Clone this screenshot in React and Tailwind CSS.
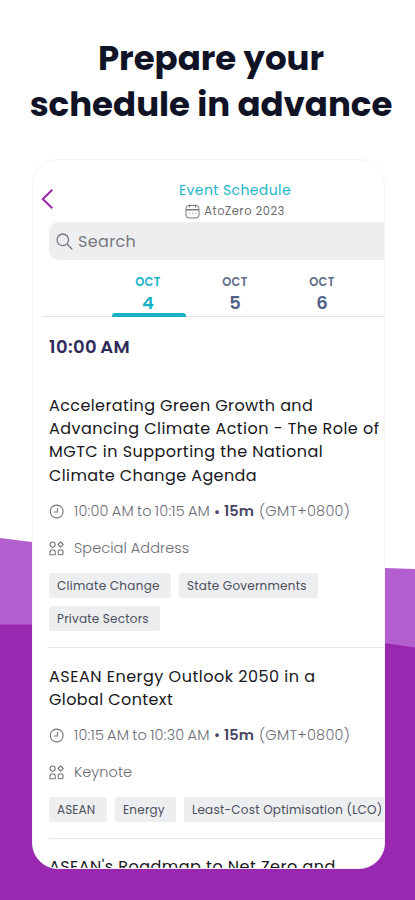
const FONT = "font-['Poppins'] font-normal";

function Backdrop() {
  return (
    <svg className="absolute inset-0 h-[900px] w-[415px]" viewBox="0 0 415 900" aria-hidden="true">
      <path d="M0 538 L32 542 L384 568 L415 569 V900 H0Z" fill="#b45fcf" />
      <path d="M0 624.5 H200 L384 643 L415 647.5 V900 H0Z" fill="#9a27b0" />
    </svg>
  );
}

function CalendarIcon() {
  return (
    <svg className="mr-[4px] h-[15px] w-[15px]" viewBox="0 0 15 15" fill="none" stroke="#77777d" strokeWidth="1">
      <rect x="1" y="1.5" width="13" height="12.5" rx="3" />
      <path d="M1.2 5.7H13.8" strokeWidth="1.4" />
      <path d="M4.5 .4V3.5M10.5 .4V3.5M4.3 9.3H5.1M7.1 9.3H7.9M9.9 9.3H10.7" />
    </svg>
  );
}

function ClockIcon() {
  return (
    <svg className="h-[15px] w-[15px]" viewBox="0 0 15 15" fill="none" stroke="#74747c" strokeWidth="1.1" strokeLinecap="round">
      <circle cx="7.7" cy="7.5" r="6.4" />
      <path d="M8.8 4.2L8.2 8H5" />
    </svg>
  );
}

function CategoryIcon() {
  return (
    <svg className="h-[15px] w-[15px]" viewBox="0 0 15 15" fill="none" stroke="#74747c" strokeWidth="1.1">
      <circle cx="3.6" cy="3.6" r="2.6" />
      <path d="M11.6 .9L14.2 3.5L11.6 6.1L9 3.5Z" strokeLinejoin="round" />
      <path d="M1 13.8V11.4A2.6 2.6 0 0 1 6.2 11.4V13.8Z" strokeLinejoin="round" />
      <rect x="9.2" y="9" width="4.8" height="4.8" rx="1" />
    </svg>
  );
}

function Chip({ children, className }) {
  return (
    <span className={`flex h-[25px] shrink-0 items-center whitespace-nowrap rounded-[2px] bg-[#eceef0] pl-2 pt-px text-[12px] text-[#4d4f5c] ${className}`}>
      {children}
    </span>
  );
}

function Meta({ time }) {
  return (
    <div className="flex h-[22px] items-center whitespace-nowrap text-[14.5px] font-light text-[#6c6c76]">
      <ClockIcon />
      <span className="ml-[10px] w-[137px] tracking-[0.2px] [word-spacing:-1.1px]">{time}</span>
      <span className="ml-[3px] w-[5px] text-[12px] font-bold text-[#4b4668]">•</span>
      <b className="ml-[5px] w-[30px] font-semibold tracking-[0.1px] text-[#4b4668]">15m</b>
      <span className="ml-[5px] tracking-[0.25px]">(GMT+0800)</span>
    </div>
  );
}

function Kind({ children }) {
  return (
    <div className="mt-[15px] flex h-[22px] items-center whitespace-nowrap text-[14.5px] font-light text-[#6c6c76]">
      <CategoryIcon />
      <span className="ml-[10px] pt-px tracking-[0.05px]">{children}</span>
    </div>
  );
}

function Day({ day, active }) {
  return (
    <div className="flex h-[45px] w-[74px] flex-col items-center">
      <span className={`-ml-0.5 text-[11.5px] font-semibold leading-[20px] tracking-[0.3px] ${active ? "text-[#18b1c8]" : "text-[#5f6a88]"}`}>OCT</span>
      <span className={`-ml-0.5 text-[18px] font-semibold leading-[21px] ${active ? "text-[#18b1c8]" : "text-[#4f6286]"}`}>{day}</span>
      {active && <span className="h-1 w-[74px] rounded-t-[3px] bg-[#18b1c8]" />}
    </div>
  );
}

export default function App() {
  return (
    <main className={`relative h-[900px] w-[415px] overflow-hidden bg-white ${FONT}`}>
      <Backdrop />
      <div className="relative flex flex-col pl-8">
        <h1 className="-ml-8 h-[159px] whitespace-nowrap pl-[7px] pt-[35px] text-center text-[34px] font-bold leading-[46px] text-[#101226]">
          <span className="block">Prepare your</span>
          <span className="block">schedule in advance</span>
        </h1>
        <section className="h-[710px] w-[353px] overflow-hidden rounded-[26px] border border-[#f3f2f5] bg-white">
          <header className="flex h-[62px] pt-[20px]">
            <svg className="ml-[8px] mt-[9px] h-5 w-3" viewBox="0 0 12 20" fill="none" stroke="#9a27a8" strokeWidth="2">
              <path d="M11.3 .8 L1.8 10 L11.3 19.2" />
            </svg>
            <div className="ml-[94px] flex w-[176px] flex-col items-center whitespace-nowrap">
              <h2 className="text-[14px] leading-[20px] tracking-[0.4px] text-[#21b6cc]">Event Schedule</h2>
              <div className="flex h-[22px] items-center text-[11.5px] text-[#6c6c72]">
                <CalendarIcon />
                <span className="pt-px tracking-[0.5px]">AtoZero 2023</span>
              </div>
            </div>
          </header>
          <div className="ml-4 flex h-[38px] items-center rounded-l-[10px] bg-[#eeeef0] pl-[7px]">
            <svg className="h-[17px] w-[17px]" viewBox="0 0 17 17" fill="none" stroke="#77777d" strokeWidth="1.3">
              <circle cx="6.8" cy="6.8" r="5.8" />
              <path d="M11 11 L16.2 16.2" />
            </svg>
            <span className="ml-[5px] pt-px text-[16px] tracking-[0.35px] text-[#77777d]">Search</span>
          </div>
          <nav className="ml-[9px] mt-[12px] flex h-[45px] gap-[13px] pl-[70px] shadow-[inset_0_-1px_0_#e5e5e8]">
            <Day day="4" active />
            <Day day="5" />
            <Day day="6" />
          </nav>
          <div className="ml-4 w-[340px]">
            <h3 className="mt-[18px] h-6 text-[18px] font-semibold leading-6 tracking-[0.4px] text-[#302a5c] [word-spacing:-1.5px]">10:00 AM</h3>
            <article className="h-[289px] border-b border-[#e9e9ec] pt-[35px]">
              <h4 className="whitespace-nowrap text-[16px] leading-[23.2px] text-[#17171c]">
                <span className="block tracking-[0.4px]">Accelerating Green Growth and</span>
                <span className="block tracking-[0.46px]">Advancing Climate Action - The Role of</span>
                <span className="block tracking-[0.46px]">MGTC in Supporting the National</span>
                <span className="block tracking-[0.4px]">Climate Change Agenda</span>
              </h4>
              <div className="mt-[14px]">
                <Meta time="10:00 AM to 10:15 AM" />
                <Kind>Special Address</Kind>
              </div>
              <div className="mt-[13px] flex flex-wrap gap-2">
                <Chip className="w-[122px] tracking-[0.27px]">Climate Change</Chip>
                <Chip className="w-[139px] tracking-[0.22px]">State Governments</Chip>
                <Chip className="w-[111px] tracking-[0.2px]">Private Sectors</Chip>
              </div>
            </article>
            <article className="h-[191px] border-b border-[#e9e9ec] pt-[17px]">
              <h4 className="whitespace-nowrap text-[16px] leading-[23.2px] text-[#17171c]">
                <span className="block tracking-[0.5px]">ASEAN Energy Outlook 2050 in a</span>
                <span className="block tracking-[0.4px]">Global Context</span>
              </h4>
              <div className="mt-[13px]">
                <Meta time="10:15 AM to 10:30 AM" />
                <Kind>Keynote</Kind>
              </div>
              <div className="mt-[14px] flex gap-2">
                <Chip className="w-[58px] tracking-[0.1px]">ASEAN</Chip>
                <Chip className="w-[61px] tracking-[0.2px]">Energy</Chip>
                <Chip className="w-[220px] tracking-[0.22px]">Least-Cost Optimisation (LCO)</Chip>
              </div>
            </article>
            <h4 className="whitespace-nowrap pt-[16px] text-[16px] leading-[23.2px] tracking-[0.47px] text-[#17171c]">ASEAN's Roadmap to Net Zero and</h4>
          </div>
        </section>
      </div>
    </main>
  );
}
